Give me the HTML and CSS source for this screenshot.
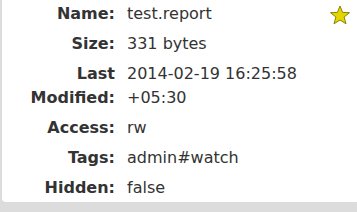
FILE: index.html
```html
<!DOCTYPE html>
<html>
<head>
<meta charset="utf-8">
<link rel="stylesheet" href="styles.css">
</head>
<body>
<div class="panel">
  <svg class="star" width="22" height="20" viewBox="0 0 22 20">
    <polygon points="11,1 13.6,7.4 20.5,7.7 15.1,12 17,18.8 11,15 5,18.8 6.9,12 1.5,7.7 8.4,7.4" fill="#e4d400" stroke="#8c8400" stroke-width="1" stroke-linejoin="round"/>
  </svg>
  <div class="grid">
    <div class="label">Name:</div><div class="value">test.report</div>
    <div class="label">Size:</div><div class="value">331 bytes</div>
    <div class="label">Last Modified:</div><div class="value">2014-02-19 16:25:58 +05:30</div>
    <div class="label">Access:</div><div class="value">rw</div>
    <div class="label">Tags:</div><div class="value">admin#watch</div>
    <div class="label">Hidden:</div><div class="value">false</div>
  </div>
</div>
</body>
</html>
```
FILE: styles.css
```css
html, body {
  margin: 0;
  padding: 0;
}
body {
  background: #dcdcdc;
  width: 357px;
  height: 212px;
  overflow: hidden;
  font-family: "DejaVu Sans", Verdana, sans-serif;
  font-size: 16px;
  color: #333;
}
.panel {
  position: relative;
  margin-left: 2px;
  width: 357px;
  height: 202px;
  background: #fff;
  border-radius: 0 0 4px 4px;
}
.grid {
  display: grid;
  grid-template-columns: 113px 200px;
  column-gap: 12px;
  line-height: 24px;
}
.label {
  font-weight: bold;
  text-align: right;
  padding: 2px 0 4px;
}
.value {
  padding: 2px 0 4px;
}
.star {
  position: absolute;
  left: 327px;
  top: 5px;
}
```
